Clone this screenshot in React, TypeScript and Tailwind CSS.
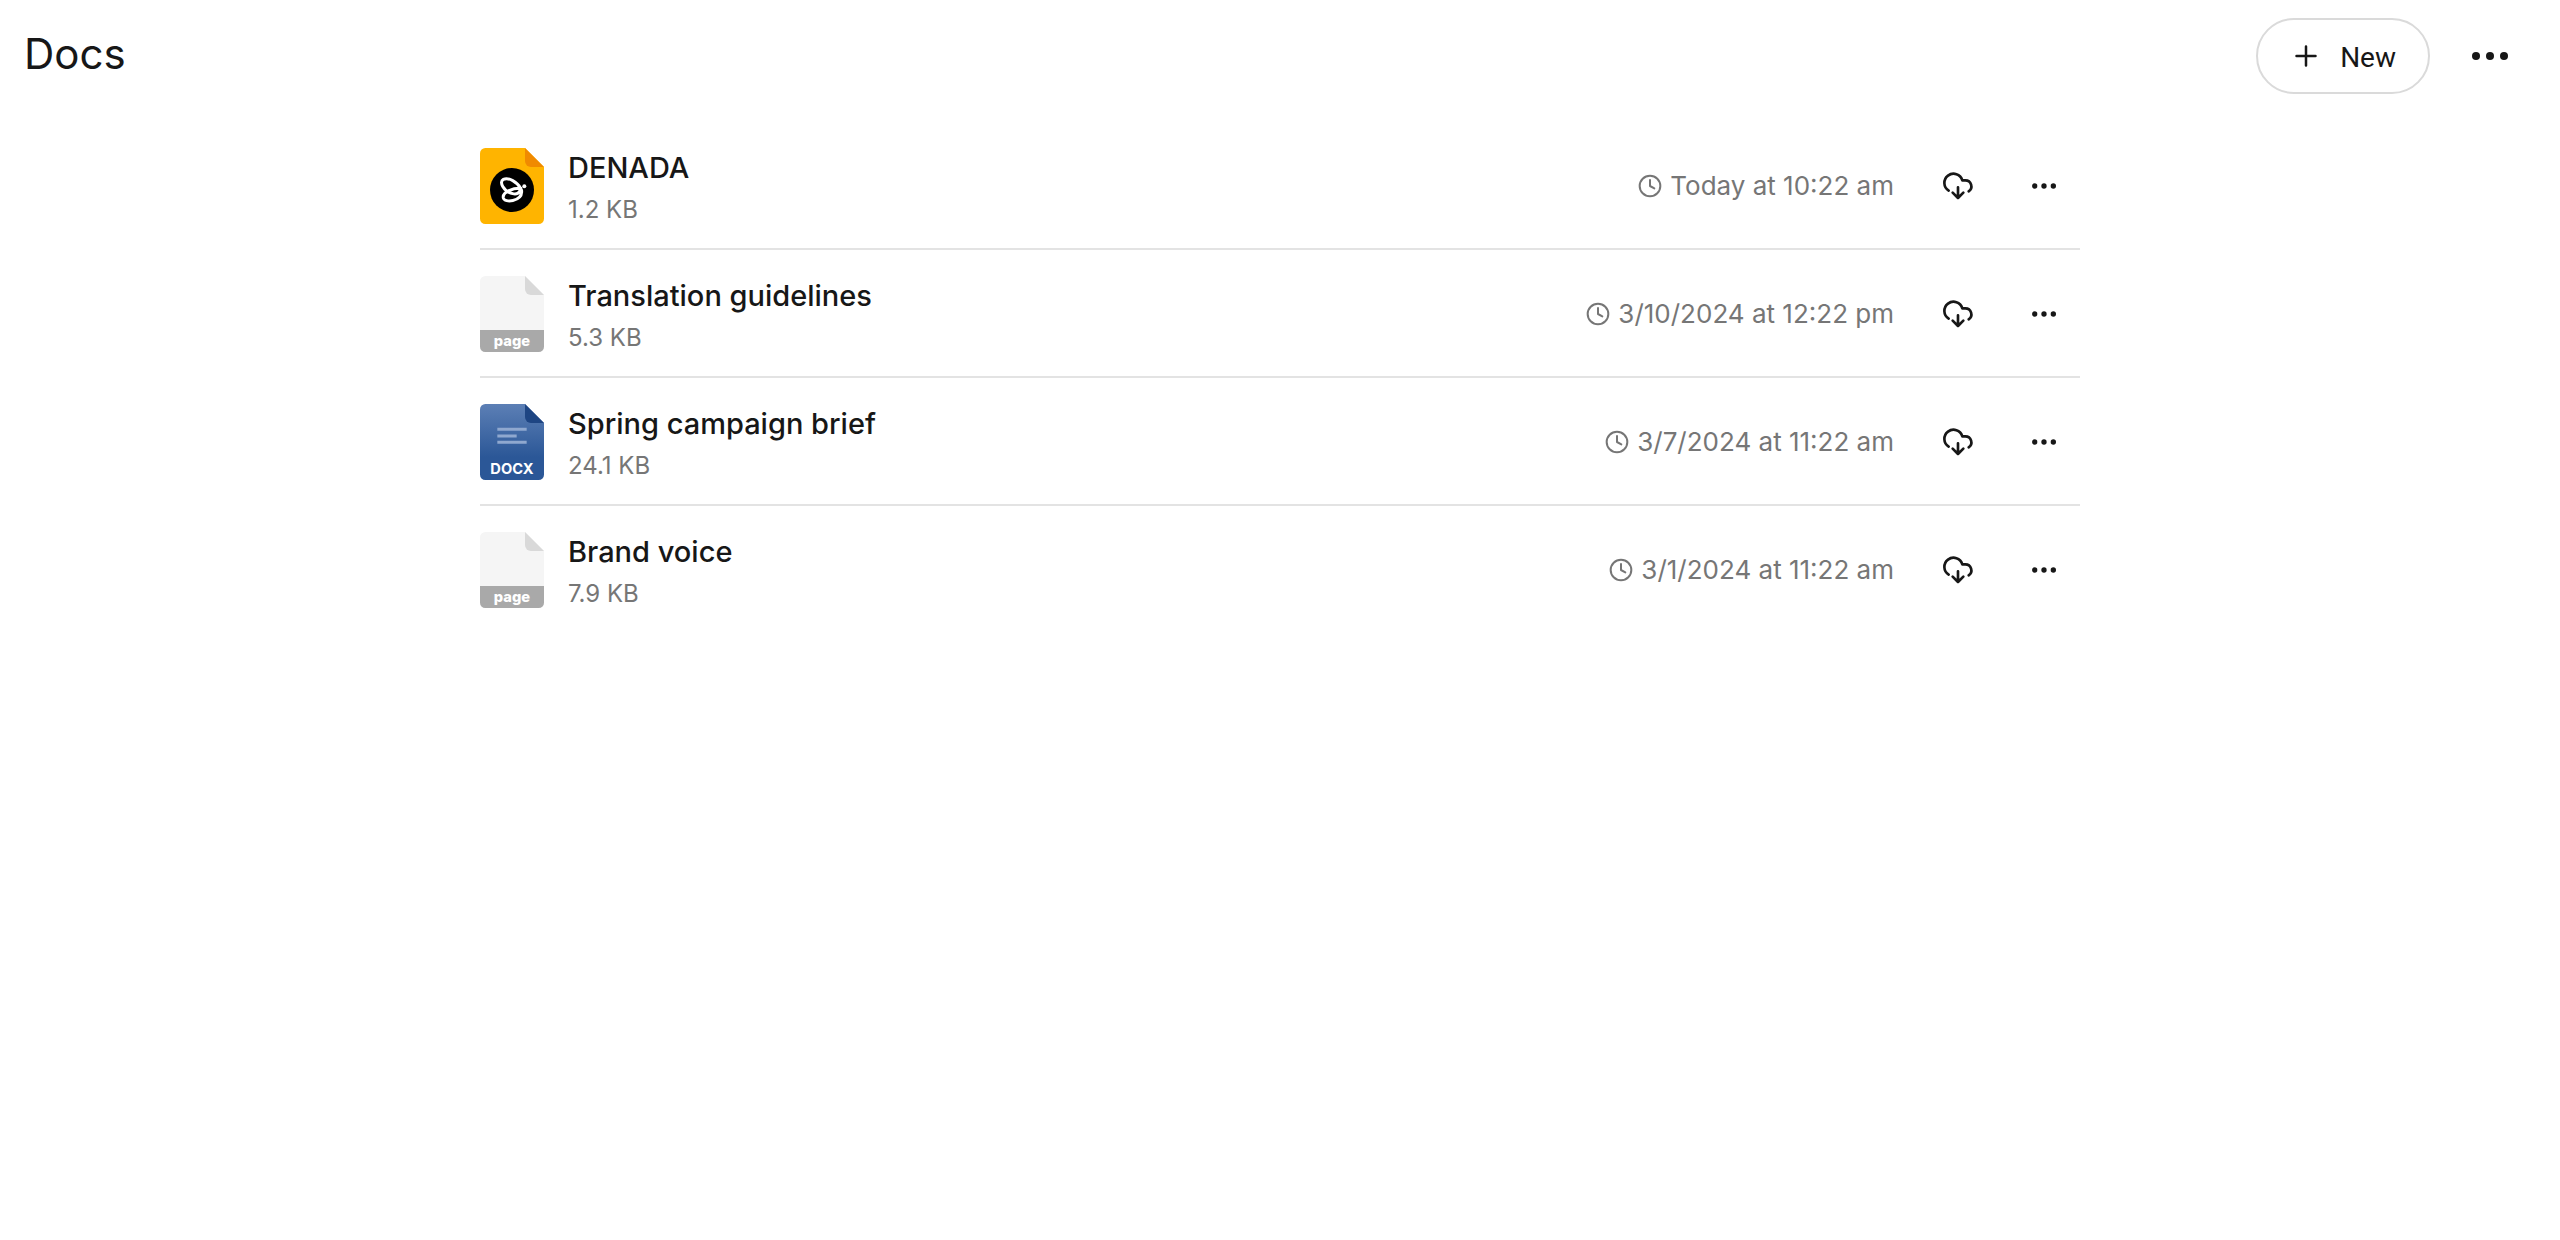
type FileKind = 'brand' | 'page' | 'docx';

type DocFile = {
  id: string;
  name: string;
  size: string;
  modified: string;
  kind: FileKind;
};

const files: DocFile[] = [
  { id: '1', name: 'DENADA', size: '1.2 KB', modified: 'Today at 10:22 am', kind: 'brand' },
  { id: '2', name: 'Translation guidelines', size: '5.3 KB', modified: '3/10/2024 at 12:22 pm', kind: 'page' },
  { id: '3', name: 'Spring campaign brief', size: '24.1 KB', modified: '3/7/2024 at 11:22 am', kind: 'docx' },
  { id: '4', name: 'Brand voice', size: '7.9 KB', modified: '3/1/2024 at 11:22 am', kind: 'page' },
];

const sheet = 'M16 0H135L192 57V212a16 16 0 0 1-16 16H16a16 16 0 0 1-16-16V16A16 16 0 0 1 16 0z';
const fold = 'M135 0L192 57H153a18 18 0 0 1-18-18z';

function FileIcon({ kind }: { kind: FileKind }) {
  return (
    <svg viewBox="0 0 192 228" className="h-19 w-16 shrink-0" aria-hidden="true">
      {kind === 'brand' && (
        <>
          <path d={sheet} fill="#ffb400" />
          <path d={fold} fill="#f08a00" />
          <circle cx="96" cy="126" r="66" fill="#000" />
          <g transform="translate(24 54)" fill="none" stroke="#fff" strokeWidth="9">
            <path d="M98 67C88 48 62 33 46 40C32 47 46 76 74 83C86 86 97 81 98 67C78 66 42 76 46 96C50 112 100 106 101 78C101 73 100 70 98 67z" />
            <circle cx="109" cy="61" r="6" fill="#fff" stroke="none" />
          </g>
        </>
      )}
      {kind === 'page' && (
        <>
          <path d={sheet} fill="#f5f5f5" />
          <path d={fold} fill="#d9d9d9" />
          <path d="M0 162H192V212a16 16 0 0 1-16 16H16a16 16 0 0 1-16-16z" fill="#a9a9a9" />
          <text x="96" y="210" textAnchor="middle" fill="#fff" className="text-[44px] font-extrabold">
            page
          </text>
        </>
      )}
      {kind === 'docx' && (
        <>
          <defs>
            <linearGradient id="docx-fill" x1="0" y1="0" x2="0" y2="1">
              <stop offset="0" stopColor="#5c7fb5" />
              <stop offset="0.7" stopColor="#2b5797" />
            </linearGradient>
          </defs>
          <path d={sheet} fill="url(#docx-fill)" />
          <path d={fold} fill="#1e4583" />
          <path d="M52 76H140M52 96H110M52 115H140" stroke="#8fa8cf" strokeWidth="9" />
          <text x="96" y="210" textAnchor="middle" fill="#fff" className="text-[44px] font-bold">
            DOCX
          </text>
        </>
      )}
    </svg>
  );
}

function ClockIcon() {
  return (
    <svg viewBox="0 0 72 72" className="size-6 shrink-0" fill="none" stroke="currentColor" strokeWidth="6" aria-hidden="true">
      <circle cx="36" cy="36" r="31" />
      <path d="M36 18V36L49 43" strokeLinecap="round" strokeLinejoin="round" />
    </svg>
  );
}

function CloudDownloadIcon() {
  return (
    <svg
      viewBox="0 0 96 96"
      className="size-8"
      fill="none"
      stroke="currentColor"
      strokeWidth="8"
      strokeLinecap="round"
      strokeLinejoin="round"
      aria-hidden="true"
    >
      <path d="M20 62A27.500 27.500 0 1 1 61 31H70A18 18 0 0 1 80 64" />
      <path d="M48 52V84M32 68L48 84L64 68" />
    </svg>
  );
}

function DotsIcon({ className }: { className: string }) {
  return (
    <svg viewBox="0 0 36 8" className={className} fill="currentColor" aria-hidden="true">
      <circle cx="4" cy="4" r="4" />
      <circle cx="18" cy="4" r="4" />
      <circle cx="32" cy="4" r="4" />
    </svg>
  );
}

export default function App() {
  return (
    <div className="min-h-screen bg-white font-['Inter',sans-serif] text-[#171717]">
      {/* Header */}
      <header className="flex items-center justify-between py-[18px] pr-[30px] pl-6">
        <h1 className="pb-1 text-[42px] leading-none">Docs</h1>
        <div className="flex items-center gap-5">
          <button className="flex h-19 items-center gap-[18px] rounded-full border-2 border-[#dadada] px-8 font-['Roboto',sans-serif] text-[28px]">
            <svg viewBox="0 0 32 32" className="size-8" stroke="currentColor" strokeWidth="2.5" strokeLinecap="round" aria-hidden="true">
              <path d="M16 6.500V25.500M6.500 16H25.500" />
            </svg>
            <span className="pt-1">New</span>
          </button>
          <button className="flex h-16 w-20 items-center justify-center" aria-label="More options">
            <DotsIcon className="h-2 w-9" />
          </button>
        </div>
      </header>

      {/* File list */}
      <main className="mx-auto max-w-[1600px] pt-[10px]">
        <ul className="divide-y-2 divide-[#e3e3e3]">
          {files.map((file) => (
            <li key={file.id} className="flex items-center pt-[26px] pb-6">
              <FileIcon kind={file.kind} />
              <div className="ml-6 flex h-19 min-w-0 flex-1 flex-col justify-center gap-1">
                <h2 className="shrink-0 truncate text-[29px] leading-11 font-medium">{file.name}</h2>
                <p className="shrink-0 text-2xl leading-8 text-[#767676]">{file.size}</p>
              </div>
              <div className="flex items-center gap-2 text-[26px] leading-8 text-[#767676]">
                <ClockIcon />
                <time>{file.modified}</time>
              </div>
              <button className="ml-10 flex h-12 w-12 items-center justify-center" aria-label={`Download ${file.name}`}>
                <CloudDownloadIcon />
              </button>
              <button className="mr-3 ml-[38px] flex h-12 w-12 items-center justify-center" aria-label={`Options for ${file.name}`}>
                <DotsIcon className="h-[6px] w-6" />
              </button>
            </li>
          ))}
        </ul>
      </main>
    </div>
  );
}
